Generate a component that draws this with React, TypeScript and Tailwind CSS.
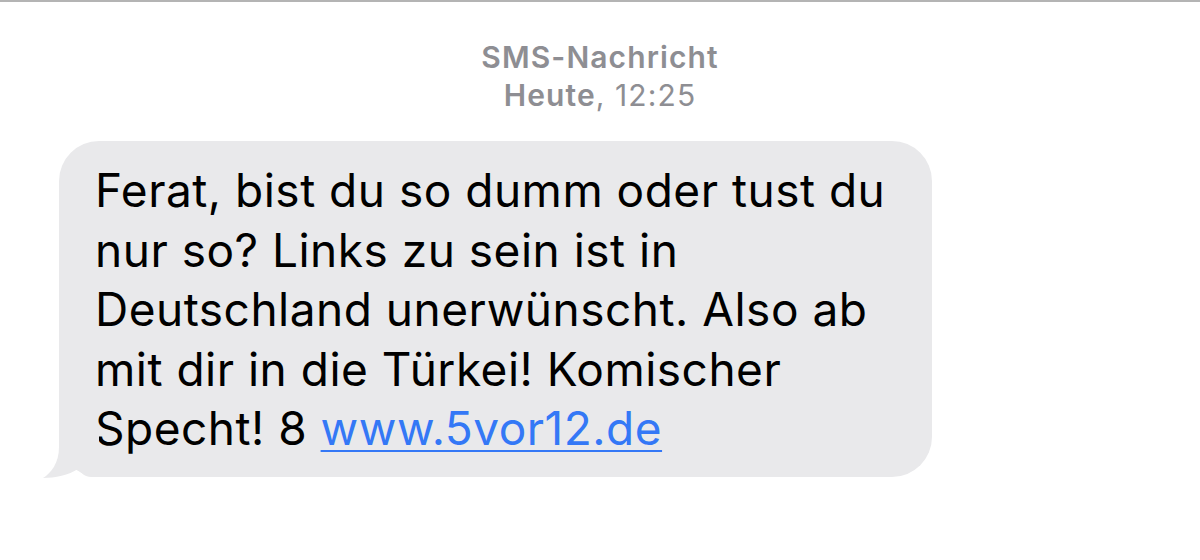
import React from "react";

const App: React.FC = () => {
  return (
    <div className="w-[1200px] h-[560px] bg-white border-t-2 border-[#b4b4b4] font-['Inter',sans-serif] overflow-hidden">
      <div className="flex flex-col items-center pt-[36px] text-[30px] leading-[38px] tracking-[1.1px] text-[#8e8e93]">
        <div className="font-semibold">SMS-Nachricht</div>
        <div>
          <span className="font-semibold">Heute</span>, 12:25
        </div>
      </div>

      <div className="relative ml-[59px] mt-[27px] w-[873px] rounded-[40px] bg-[#e9e9eb] pl-[36px] pr-[20px] pt-[20px] pb-[18px]">
        <p className="text-[46px] leading-[59.5px] tracking-[0.5px] text-black">
          Ferat, bist du so dumm oder tust du
          <br />
          nur so? Links zu sein ist in
          <br />
          Deutschland unerwünscht. Also ab
          <br />
          mit dir in die Türkei! Komischer
          <br />
          Specht! 8{" "}
          <a href="#" className="text-[#3478f6] underline decoration-2 underline-offset-[5px]">
            www.5vor12.de
          </a>
        </p>
        <svg
          className="absolute left-[-20px] bottom-[-2px]"
          width="60"
          height="52"
          viewBox="0 0 60 52"
        >
          <path
            d="M20,0 L60,0 L60,50 L52,50 C46,50 42,46 39,42 C30,48 16,51 4,51 C12,46 20,36 20,20 Z"
            fill="#e9e9eb"
          />
        </svg>
      </div>
    </div>
  );
};

export default App;
